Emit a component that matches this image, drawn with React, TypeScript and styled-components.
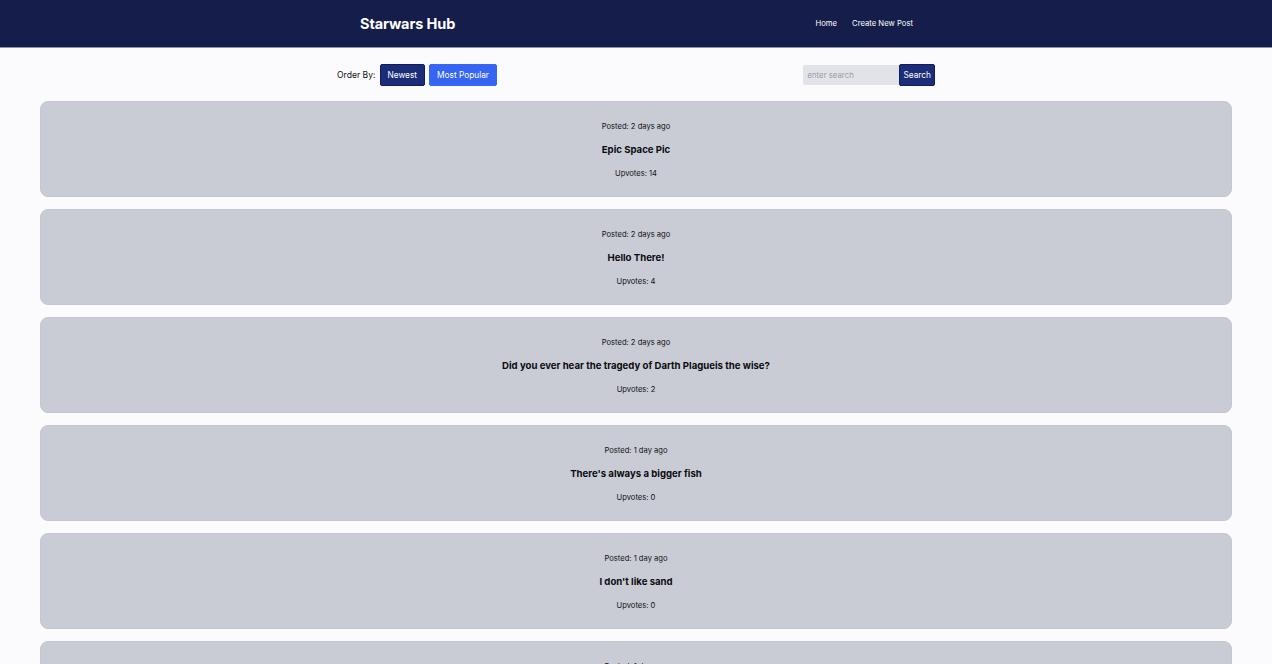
import React from "react";
import styled, { createGlobalStyle } from "styled-components";

const Global = createGlobalStyle`
  html, body { margin: 0; padding: 0; background: #fbfafd; }
  body { font-family: Inter, "Noto Sans", Arial, sans-serif; color: #111; }
  * { box-sizing: border-box; }
`;

const Header = styled.header`
  height: 48px;
  background: #151d4a;
  border-bottom: 1px solid #8d93ad;
  display: flex;
  justify-content: center;
`;

const HeaderInner = styled.div`
  width: 553px;
  margin-left: 1px;
  display: flex;
  align-items: center;
  justify-content: space-between;
`;

const Brand = styled.h1`
  margin: 0;
  color: #ffffff;
  font-size: 14.5px;
  font-weight: 700;
  letter-spacing: -0.1px;
`;

const Nav = styled.nav`
  display: flex;
  gap: 15px;
`;

const NavLink = styled.a`
  color: #ffffff;
  font-size: 7.7px;
  text-decoration: none;
`;

const Toolbar = styled.div`
  width: 598px;
  margin: 15px auto 0;
  height: 23px;
  display: flex;
  align-items: center;
  justify-content: space-between;
`;

const OrderGroup = styled.div`
  display: flex;
  align-items: center;
  gap: 4px;
`;

const Label = styled.span`
  font-size: 8.6px;
  color: #111;
`;

const Button = styled.button<{ $variant: "dark" | "bright" }>`
  height: 22px;
  padding: 0 7px;
  border: 1px solid ${(p) => (p.$variant === "dark" ? "#0f1d5a" : "#3a66f2")};
  border-radius: 2px;
  background: ${(p) => (p.$variant === "dark" ? "#1b2d78" : "#3565f2")};
  color: #ffffff;
  font-family: inherit;
  font-size: 8.3px;
  cursor: pointer;
`;

const SearchGroup = styled.div`
  display: flex;
  align-items: center;
`;

const SearchInput = styled.input`
  width: 96px;
  height: 20px;
  border: none;
  border-radius: 2px 0 0 2px;
  background: #e2e3e9;
  padding: 0 4px;
  font-family: inherit;
  font-size: 7.8px;
  outline: none;
  &::placeholder { color: #9a9ca6; }
`;

const SearchButton = styled(Button)`
  padding: 0 3px;
`;

const List = styled.main`
  margin: 15px 40px 0;
  display: flex;
  flex-direction: column;
  gap: 12px;
`;

const Card = styled.article`
  height: 96px;
  padding-top: 2px;
  background: #c9ccd5;
  border-radius: 8px;
  border: 1px solid #c4c7d0;
  display: flex;
  flex-direction: column;
  align-items: center;
  justify-content: center;
`;

const Meta = styled.p`
  margin: 0;
  font-size: 7.6px;
  color: #111;
  line-height: 10px;
`;

const Title = styled.h2`
  margin: 12px 0 13px;
  font-size: 9.6px;
  font-weight: 700;
  color: #0b0b0f;
  line-height: 12px;
`;

const posts = [
  { posted: "2 days ago", title: "Epic Space Pic", upvotes: 14 },
  { posted: "2 days ago", title: "Hello There!", upvotes: 4 },
  { posted: "2 days ago", title: "Did you ever hear the tragedy of Darth Plagueis the wise?", upvotes: 2 },
  { posted: "1 day ago", title: "There's always a bigger fish", upvotes: 0 },
  { posted: "1 day ago", title: "I don't like sand", upvotes: 0 },
  { posted: "1 day ago", title: "Just a simple man", upvotes: 0 },
];

export default function App() {
  return (
    <>
      <Global />
      <Header>
        <HeaderInner>
          <Brand>Starwars Hub</Brand>
          <Nav>
            <NavLink href="#">Home</NavLink>
            <NavLink href="#">Create New Post</NavLink>
          </Nav>
        </HeaderInner>
      </Header>
      <Toolbar>
        <OrderGroup>
          <Label>Order By:</Label>
          <Button $variant="dark">Newest</Button>
          <Button $variant="bright">Most Popular</Button>
        </OrderGroup>
        <SearchGroup>
          <SearchInput placeholder="enter search" />
          <SearchButton $variant="dark">Search</SearchButton>
        </SearchGroup>
      </Toolbar>
      <List>
        {posts.map((p, i) => (
          <Card key={i}>
            <Meta>Posted: {p.posted}</Meta>
            <Title>{p.title}</Title>
            <Meta>Upvotes: {p.upvotes}</Meta>
          </Card>
        ))}
      </List>
    </>
  );
}
